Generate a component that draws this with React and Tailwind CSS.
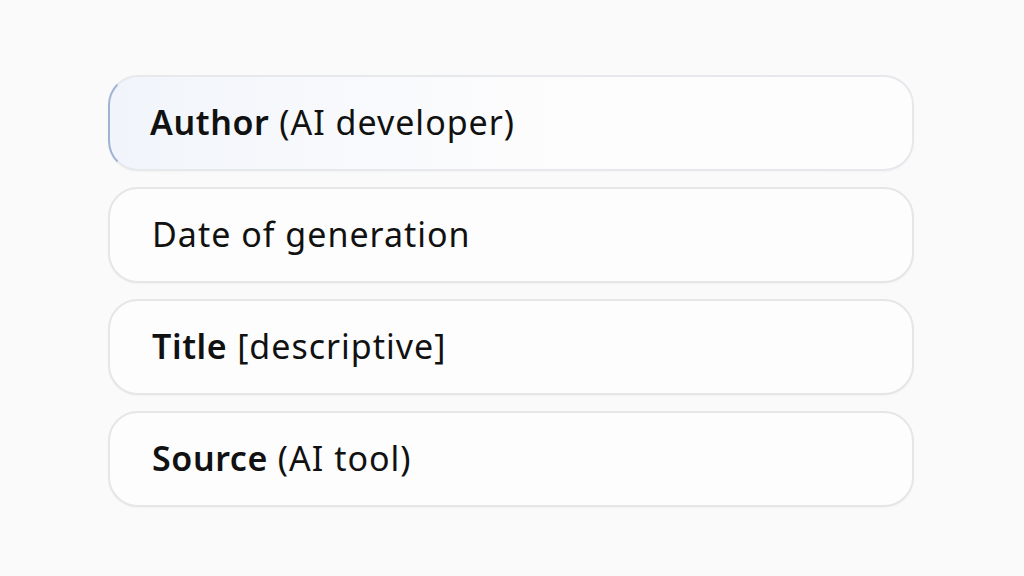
import React from 'react';

const rows = [
  { bold: 'Author', rest: ' (AI developer)', active: true },
  { bold: '', rest: 'Date of generation' },
  { bold: 'Title', rest: ' [descriptive]' },
  { bold: 'Source', rest: ' (AI tool)' },
];

export default function App() {
  return (
    <div
      className="w-[1024px] h-[576px] bg-[#fafafa] pt-[75px] pl-[108px]"
      style={{ fontFamily: '"Noto Sans", Lato, sans-serif' }}
    >
      <div className="flex flex-col gap-4 w-[806px]">
        {rows.map((r, i) => (
          <div
            key={i}
            className={
              r.active
                ? 'h-[96px] rounded-[30px] border-2 border-[#e6e8ec] border-l-[#9fb3d6] bg-gradient-to-r from-[#f1f5fb] via-[#fcfcfd] to-[#fdfdfd] flex items-center pl-[40px] shadow-[0_1px_2px_rgba(0,0,0,0.03)]'
                : 'h-[96px] rounded-[30px] border-2 border-[#e6e6e6] bg-[#fdfdfd] flex items-center pl-[42px] shadow-[0_1px_2px_rgba(0,0,0,0.03)]'
            }
          >
            <span className="text-[34px] text-[#111111] tracking-[1px] pb-[2px]">
              {r.bold && <span className="font-semibold tracking-[0.6px]">{r.bold}</span>}
              {r.rest}
            </span>
          </div>
        ))}
      </div>
    </div>
  );
}
